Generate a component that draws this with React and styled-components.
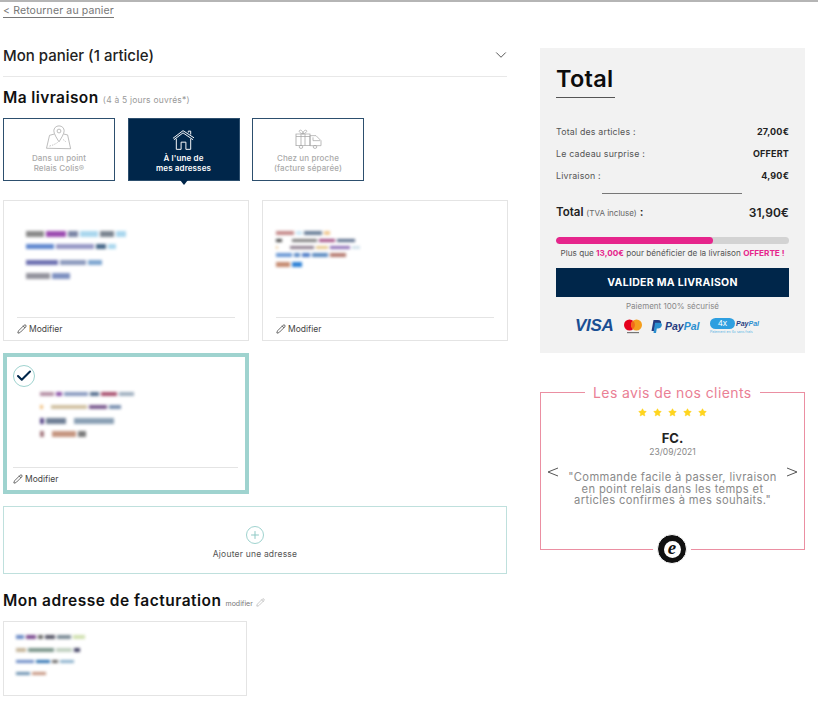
import React from 'react'
import styled, {createGlobalStyle} from 'styled-components'
import {ChevronDown, Check, Plus, Pencil, Star} from 'lucide-react'

const GlobalStyle = createGlobalStyle`
html, body {
    margin: 0;
    background: #fff;
    font-family: Inter, "Open Sans", sans-serif;
    color: #111;
}
* { box-sizing: border-box; }
`

const Page = styled.div`
    width: 818px;
    height: 711px;
    overflow: hidden;
    border-top: 2px solid #b5b5b5;
    padding: 0 0 0 3px;
`
const BackLink = styled.a`
    display: block;
    width: max-content;
    margin-top: 2px;
    height: 14px;
    line-height: 13px;
    font-size: 10.5px;
    letter-spacing: .13px;
    color: #777;
    text-decoration: none;
    border-bottom: 1px solid #777;
`
const Columns = styled.div`
    display: grid;
    grid-template-columns: 504px 265px;
    column-gap: 33px;
    margin-top: 28px;
`
const Left = styled.div`
    display: flex;
    flex-direction: column;
`
const CartHeader = styled.div`
    display: flex;
    align-items: center;
    justify-content: space-between;
    height: 31px;
    padding-bottom: 14px;
    padding-top: 2px;
    border-bottom: 1px solid #e8e8e8;
    font-size: 15px;
    font-weight: 500;
    letter-spacing: 0;
    color: #222;
    svg { color: #333; margin-right: -3px; }
`
const SectionTitle = styled.h2`
    margin: ${p => p.$top}px 0 0;
    font-size: 15.5px;
    line-height: 20px;
    font-weight: 600;
    letter-spacing: ${p => p.$spacing}px;
    color: #111;
    small {
        font-size: 8.5px;
        font-weight: 400;
        color: #999;
        letter-spacing: .2px;
    }
`
const Tabs = styled.div`
    display: flex;
    gap: 12.5px;
    margin-top: 8px;
`
const Tab = styled.div`
    position: relative;
    width: 112px;
    height: 63px;
    display: flex;
    flex-direction: column;
    align-items: center;
    padding-top: ${p => p.$top}px;
    background: ${p => p.$active ? '#00264a' : '#fff'};
    border: 1px solid #2d4f6e;
    color: ${p => p.$active ? '#fff' : '#aaa'};
    font-size: 8px;
    line-height: 9.7px;
    letter-spacing: .12px;
    font-weight: ${p => p.$active ? 600 : 500};
    text-align: center;
    white-space: nowrap;
    svg { display: block; }
    span { margin-top: ${p => p.$gap}px; }
    ${p => p.$active && `
    &:after {
        content: '';
        position: absolute;
        left: 50%;
        bottom: -5px;
        margin-left: -4px;
        border-left: 4px solid transparent;
        border-right: 4px solid transparent;
        border-top: 5px solid #00264a;
    }`}
`
const Cards = styled.div`
    display: grid;
    grid-template-columns: 246px 246px;
    column-gap: 13px;
    row-gap: 12px;
    margin-top: 19px;
`
const Card = styled.div`
    position: relative;
    height: 141px;
    display: flex;
    flex-direction: column;
    background: #fff;
    border: ${p => p.$selected ? '4px solid #9fd3cf' : '1px solid #e4e4e4'};
    padding: ${p => p.$selected ? '0 7px 0 6px' : '0 13px'};
`
const CheckMark = styled.div`
    position: absolute;
    left: 6px;
    top: 8px;
    width: 22px;
    height: 22px;
    border-radius: 50%;
    border: 1px solid #9fd3cf;
    background: #fff;
    display: flex;
    align-items: center;
    justify-content: center;
    color: #00264a;
`
const CardFooter = styled.div`
    margin-top: auto;
    height: 23px;
    border-top: 1px solid #e4e4e4;
    display: flex;
    align-items: center;
    gap: 2px;
    font-size: 8.5px;
    color: #444;
    svg { color: #222; }
`
const Smudges = styled.div`
    display: flex;
    flex-direction: column;
    margin-top: ${p => p.$top}px;
    margin-left: ${p => p.$left}px;
    filter: blur(1.8px);
`
const SmudgeRow = styled.div`
    display: flex;
    gap: 2px;
    height: ${p => p.$h}px;
    margin-top: ${p => p.$gap}px;
`
const Smudge = styled.i`
    display: block;
    height: 100%;
    width: ${p => p.$w}px;
    background: ${p => p.$c};
`
const AddCard = styled.div`
    height: 68px;
    margin-top: 12px;
    border: 1px solid #bfe0dd;
    display: flex;
    flex-direction: column;
    align-items: center;
    padding-top: 19px;
    font-size: 8.5px;
    letter-spacing: .2px;
    color: #555;
`
const PlusCircle = styled.div`
    width: 18px;
    height: 18px;
    border-radius: 50%;
    border: 1px solid #9fd3cf;
    color: #8fc9c5;
    display: flex;
    align-items: center;
    justify-content: center;
    margin-bottom: 5px;
`
const EditHint = styled.span`
    font-size: 7px;
    font-weight: 400;
    letter-spacing: 0;
    color: #777;
    margin-left: 4px;
    svg { margin-left: 3px; color: #777; vertical-align: -1px; }
`
const BillingCard = styled.div`
    width: 244px;
    height: 75px;
    margin-top: 7px;
    border: 1px solid #e4e4e4;
`

const Right = styled.div`
    display: flex;
    flex-direction: column;
`
const TotalPanel = styled.section`
    height: 305px;
    margin-top: 2px;
    background: #f2f2f2;
    padding: 16px 16px 0;
`
const TotalTitle = styled.h1`
    width: 59px;
    margin: 0;
    height: 34px;
    font-size: 23.5px;
    line-height: 30px;
    font-weight: 600;
    letter-spacing: .3px;
    color: #0c0c0c;
    white-space: nowrap;
    border-bottom: 1px solid #555;
`
const Lines = styled.div`
    margin-top: 22px;
`
const Line = styled.div`
    display: flex;
    justify-content: space-between;
    align-items: center;
    height: 22px;
    font-size: 8.8px;
    letter-spacing: .2px;
    color: #555;
    b { font-weight: 700; color: #222; font-size: 9px; }
`
const ShortRule = styled.div`
    width: 140px;
    height: 1px;
    background: #777;
    margin: 7px 0 0 46px;
`
const GrandLine = styled.div`
    display: flex;
    justify-content: space-between;
    align-items: center;
    margin-top: 8px;
    height: 20px;
    font-size: 11.5px;
    font-weight: 600;
    color: #222;
    small { font-size: 8px; font-weight: 400; color: #666; }
    b { font-size: 12px; font-weight: 600; }
`
const Progress = styled.div`
    height: 7px;
    margin-top: 15px;
    border-radius: 4px;
    background: #d3d3d3;
    overflow: hidden;
`
const ProgressFill = styled.div`
    height: 100%;
    border-radius: 4px;
    background: #e6258c;
`
const ProgressText = styled.p`
    margin: 4px 0 0;
    font-size: 8.2px;
    line-height: 10px;
    text-align: center;
    white-space: nowrap;
    color: #555;
    b { font-weight: 700; color: #e6258c; }
`
const SubmitButton = styled.button`
    display: block;
    width: 100%;
    height: 29px;
    margin-top: 10px;
    border: 0;
    background: #00264a;
    color: #fff;
    font-family: inherit;
    font-size: 10.5px;
    font-weight: 700;
    letter-spacing: .3px;
`
const Secure = styled.p`
    margin: 4px 0 0;
    font-size: 8px;
    line-height: 10px;
    text-align: center;
    color: #888;
`
const Payments = styled.div`
    display: flex;
    align-items: center;
    height: 20px;
    margin-top: 5px;
    padding-left: 19px;
`
const VisaText = styled.span`
    font-family: "Liberation Sans", sans-serif;
    font-size: 17px;
    font-weight: 700;
    font-style: italic;
    letter-spacing: -.3px;
    color: #1a4f93;
    width: 49px;
`
const CardGap = styled.span`
    width: 9px;
`
const PayPalText = styled.span`
    font-family: "Liberation Sans", sans-serif;
    font-size: 10.5px;
    font-weight: 700;
    font-style: italic;
    color: #253b80;
    margin-left: 3px;
    width: 45px;
    em { color: #2a8fd0; }
`
const FourX = styled.div`
    display: flex;
    flex-direction: column;
    gap: 1px;
`
const FourXTop = styled.div`
    display: flex;
    align-items: center;
    font-family: "Liberation Sans", sans-serif;
    font-size: 7px;
    font-weight: 700;
    font-style: italic;
    color: #253b80;
    em { color: #2a8fd0; }
`
const FourXPill = styled.span`
    width: 25px;
    height: 11px;
    border-radius: 6px;
    margin-right: 1px;
    background: #2e9fe0;
    color: #fff;
    font-style: normal;
    font-size: 8.5px;
    font-weight: 400;
    line-height: 11px;
    text-align: center;
`
const FourXNote = styled.span`
    font-size: 3.5px;
    line-height: 4px;
    color: #5bb5e5;
`
const Reviews = styled.section`
    position: relative;
    height: 158px;
    margin-top: 39px;
    border: 1px solid #eb8fa2;
    display: flex;
    flex-direction: column;
    align-items: center;
    padding-top: 15px;
`
const ReviewsTitle = styled.h3`
    position: absolute;
    left: 44px;
    top: -9px;
    margin: 0;
    padding: 0 8px;
    background: #fff;
    font-size: 14px;
    line-height: 17px;
    font-weight: 400;
    letter-spacing: .4px;
    white-space: nowrap;
    color: #ea8095;
`
const Stars = styled.div`
    display: flex;
    gap: 6px;
    color: #ffd51e;
    svg { fill: currentColor; }
`
const Reviewer = styled.div`
    margin-top: 14px;
    font-size: 13px;
    line-height: 15px;
    font-weight: 700;
    color: #222;
`
const ReviewDate = styled.div`
    font-size: 8.5px;
    line-height: 12px;
    color: #888;
`
const Quote = styled.div`
    display: flex;
    align-items: flex-start;
    justify-content: space-between;
    align-self: stretch;
    padding: 5px 6px 0;
    margin-top: 3px;
    svg { color: #555; flex: none; }
`
const QuoteText = styled.p`
    margin: 6px 0 0;
    width: 215px;
    font-size: 11.2px;
    line-height: 11.5px;
    text-align: center;
    letter-spacing: .35px;
    color: #8a8a8a;
`
const TrustBadge = styled.div`
    position: absolute;
    left: 116px;
    bottom: -15px;
    width: 30px;
    height: 30px;
    border-radius: 50%;
    border: 1px solid #fff;
    outline: 4px solid #fff;
    background: #111;
    display: flex;
    align-items: center;
    justify-content: center;
`
const BadgeInner = styled.div`
    width: 17px;
    height: 17px;
    border-radius: 50%;
    background: #fff;
    color: #111;
    font-family: "Liberation Serif", serif;
    font-style: italic;
    font-size: 19px;
    font-weight: 700;
    line-height: 14px;
    text-align: center;
`

const PinMapIcon = () => (
    <svg width="28" height="25" viewBox="0 0 32 29" fill="none" stroke="#a9a9a9" strokeWidth=".9">
        <path d="M16 1c-3.600 0-6 2.700-6 5.800 0 3.300 3.500 8.700 6 12.700 2.500-4 6-9.400 6-12.700C22 3.700 19.600 1 16 1z" />
        <circle cx="16" cy="7" r="2.200" />
        <path d="M10.500 10.500 5 12 1.500 27 29.500 27.500 26 11.500 21.500 10.500" />
        <path d="M5 24.500c2-1 4-1 5.500-2s3-1 5-3.500 M21 17l3 2.500" strokeDasharray="1.500 1.500" />
    </svg>
)
const HouseIcon = () => (
    <svg width="23" height="20" viewBox="0 3 24 20.500" fill="none" stroke="#fff" strokeWidth="1">
        <path d="M1 11.500 11.500 3.500 23 11" />
        <path d="M2 13 11.500 5.800 22 13" />
        <path d="M4.500 12v11h5v-7.500h5V23h5V12" />
        <path d="M17 5.500V4h2.500v3.500" />
    </svg>
)
const TruckGiftIcon = () => (
    <svg width="27" height="20" viewBox="0 0 27 24" fill="none" stroke="#a3a3a3" strokeWidth=".8" preserveAspectRatio="none">
        <rect x="1" y="6" width="14" height="14" />
        <path d="M6 6v14M10 6v14M1 9h14" />
        <path d="M8 6C5 5 3.500 3 4.500 1.800S8 2 8 6c0-4 2.500-5.200 3.500-4.200S11 5 8 6z" />
        <path d="M15 8h6l5 6v6h-11z" />
        <path d="M18 10v4h7" />
        <circle cx="6" cy="21.500" r="1.800" />
        <circle cx="20" cy="21.500" r="1.800" />
    </svg>
)
const MastercardIcon = () => (
    <svg width="18" height="15" viewBox="0 0 18 15">
        <circle cx="5.500" cy="6" r="5.500" fill="#e5001c" />
        <circle cx="12.500" cy="6" r="5.500" fill="#f59e1d" />
        <path d="M9 1.800a5.500 5.500 0 0 1 0 8.400 5.500 5.500 0 0 1 0-8.400z" fill="#f26a1b" />
        <rect x="3" y="13" width="12" height="1.200" fill="#777" />
    </svg>
)
const PayPalMark = () => (
    <svg width="11" height="13" viewBox="0 0 11 13">
        <path d="M2.500 0H7c2.500 0 3.500 1.500 3 3.500C9.500 6 7.800 7 5.500 7H4l-.8 4H.5z" fill="#253b80" />
        <path d="M4 2.800h4.500c1.800 0 2.700 1 2.300 2.700-.4 2-2 3-3.800 3H5.800L5 13H2.500z" fill="#2a8fd0" />
    </svg>
)

const address1 = [
    {gap: 0, h: 6, parts: [[18, '#8a8a8a'], [20, '#9c4bb0'], [10, '#7a85a5'], [18, '#a9d7ee'], [14, '#7b8590'], [10, '#a9d7ee']]},
    {gap: 7, h: 5, parts: [[28, '#5f87cf'], [38, '#9597c5'], [10, '#456789'], [8, '#a9d7ee']]},
    {gap: 11, h: 5, parts: [[32, '#6c6fb0'], [26, '#8b99bd'], [14, '#7ea5d0']]},
    {gap: 8, h: 6, parts: [[24, '#93939d'], [18, '#7e90c0']]},
]
const address2 = [
    {gap: 0, h: 4, parts: [[18, '#c58a8a'], [6, '#cfeaf7'], [18, '#6a7f98'], [6, '#f0c690']]},
    {gap: 4, h: 3, parts: [[6, '#444'], [6, '#fff'], [25, '#7a7a7a'], [16, '#a04a80'], [18, '#566a89']]},
    {gap: 4, h: 3, parts: [[2, '#f0d0a0'], [8, '#fff'], [24, '#8a7a8a'], [12, '#e5c58a'], [20, '#8a6ab5'], [8, '#cfe0ea']]},
    {gap: 4, h: 4, parts: [[16, '#6a98d5'], [6, '#5a89c5'], [8, '#4a79c5'], [16, '#5a8ac0'], [16, '#b57a70']]},
    {gap: 5, h: 5, parts: [[14, '#c58a70'], [10, '#2a7fd5']]},
]
const address3 = [
    {gap: 0, h: 4, parts: [[14, '#b590a5'], [6, '#8a50a5'], [24, '#8a9bc0'], [9, '#566f8f'], [16, '#a8506f'], [15, '#a0b0c0']]},
    {gap: 9, h: 4, parts: [[3, '#f0c080'], [4, '#fff'], [36, '#d0c0a0'], [18, '#7a5a8f'], [12, '#7a90b0']]},
    {gap: 9, h: 6, parts: [[4, '#5a4a8a'], [20, '#6f7f95'], [4, '#fff'], [40, '#8aa0b5']]},
    {gap: 7, h: 6, parts: [[4, '#a57a80'], [4, '#fff'], [24, '#c59580'], [8, '#7a7a7a']]},
]
const billing = [
    {gap: 0, h: 4, parts: [[8, '#6a8ac5'], [10, '#7a4a8f'], [5, '#666'], [10, '#556'], [14, '#7a8a95'], [12, '#d0e0b0']]},
    {gap: 9, h: 4, parts: [[10, '#c5b59a'], [26, '#7a958a'], [16, '#c0d0c0'], [6, '#446']]},
    {gap: 8, h: 3, parts: [[18, '#6a8ac5'], [14, '#2a6fb0'], [6, '#666'], [14, '#8ab0cc']]},
    {gap: 9, h: 3, parts: [[14, '#6a90b0'], [14, '#c59580']]},
]

const BlurredAddress = ({rows, top, left}) => (
    <Smudges $top={top} $left={left}>
        {rows.map((row, i) => (
            <SmudgeRow key={i} $gap={row.gap} $h={row.h}>
                {row.parts.map(([w, c], j) => <Smudge key={j} $w={w} $c={c} />)}
            </SmudgeRow>
        ))}
    </Smudges>
)

const Modifier = () => (
    <CardFooter>
        <Pencil size={10} strokeWidth={1.6} /> Modifier
    </CardFooter>
)

export default function App() {
    return (
        <Page>
            <GlobalStyle />
            <BackLink>&lt; Retourner au panier</BackLink>
            <Columns>
                <Left>
                    <CartHeader>
                        Mon panier (1 article)
                        <ChevronDown size={18} strokeWidth={1.1} />
                    </CartHeader>
                    <SectionTitle $top={11} $spacing={.4}>Ma livraison <small>(4 à 5 jours ouvrés*)</small></SectionTitle>
                    <Tabs>
                        <Tab $top={6} $gap={4}>
                            <PinMapIcon />
                            <span>Dans un point<br />Relais Colis®</span>
                        </Tab>
                        <Tab $active $top={11} $gap={4}>
                            <HouseIcon />
                            <span>À l'une de<br />mes adresses</span>
                        </Tab>
                        <Tab $top={10} $gap={5}>
                            <TruckGiftIcon />
                            <span>Chez un proche<br />(facture séparée)</span>
                        </Tab>
                    </Tabs>
                    <Cards>
                        <Card>
                            <BlurredAddress rows={address1} top={30} left={9} />
                            <Modifier />
                        </Card>
                        <Card>
                            <BlurredAddress rows={address2} top={30} left={0} />
                            <Modifier />
                        </Card>
                        <Card $selected>
                            <CheckMark><Check size={18} strokeWidth={2.8} /></CheckMark>
                            <BlurredAddress rows={address3} top={35} left={27} />
                            <Modifier />
                        </Card>
                    </Cards>
                    <AddCard>
                        <PlusCircle><Plus size={12} strokeWidth={2} /></PlusCircle>
                        Ajouter une adresse
                    </AddCard>
                    <SectionTitle $top={17} $spacing={.5}>
                        Mon adresse de facturation
                        <EditHint>modifier<Pencil size={9} strokeWidth={1} /></EditHint>
                    </SectionTitle>
                    <BillingCard>
                        <BlurredAddress rows={billing} top={13} left={12} />
                    </BillingCard>
                </Left>
                <Right>
                    <TotalPanel>
                        <TotalTitle>Total</TotalTitle>
                        <Lines>
                            <Line>Total des articles : <b>27,00€</b></Line>
                            <Line>Le cadeau surprise : <b>OFFERT</b></Line>
                            <Line>Livraison : <b>4,90€</b></Line>
                        </Lines>
                        <ShortRule />
                        <GrandLine>
                            <span>Total <small>(TVA incluse)</small> :</span>
                            <b>31,90€</b>
                        </GrandLine>
                        <Progress>
                            <ProgressFill style={{width: `${(27 / 40) * 100}%`}} />
                        </Progress>
                        <ProgressText>
                            Plus que <b>13,00€</b> pour bénéficier de la livraison <b>OFFERTE !</b>
                        </ProgressText>
                        <SubmitButton>VALIDER MA LIVRAISON</SubmitButton>
                        <Secure>Paiement 100% sécurisé</Secure>
                        <Payments>
                            <VisaText>VISA</VisaText>
                            <MastercardIcon />
                            <CardGap />
                            <PayPalMark />
                            <PayPalText>Pay<em>Pal</em></PayPalText>
                            <FourX>
                                <FourXTop><FourXPill>4x</FourXPill>Pay<em>Pal</em></FourXTop>
                                <FourXNote>Paiement en 4x sans frais</FourXNote>
                            </FourX>
                        </Payments>
                    </TotalPanel>
                    <Reviews>
                        <ReviewsTitle>Les avis de nos clients</ReviewsTitle>
                        <Stars>
                            {[0, 1, 2, 3, 4].map(i => <Star key={i} size={9} strokeWidth={1} />)}
                        </Stars>
                        <Reviewer>FC.</Reviewer>
                        <ReviewDate>23/09/2021</ReviewDate>
                        <Quote>
                            <svg width="12" height="12" viewBox="0 0 12 12" fill="none" stroke="currentColor"><path d="M11 2 1 6l10 4" /></svg>
                            <QuoteText>"Commande facile à passer, livraison en point relais dans les temps et articles confirmes à mes souhaits."</QuoteText>
                            <svg width="12" height="12" viewBox="0 0 12 12" fill="none" stroke="currentColor"><path d="M1 2l10 4-10 4" /></svg>
                        </Quote>
                        <TrustBadge><BadgeInner>e</BadgeInner></TrustBadge>
                    </Reviews>
                </Right>
            </Columns>
        </Page>
    )
}
